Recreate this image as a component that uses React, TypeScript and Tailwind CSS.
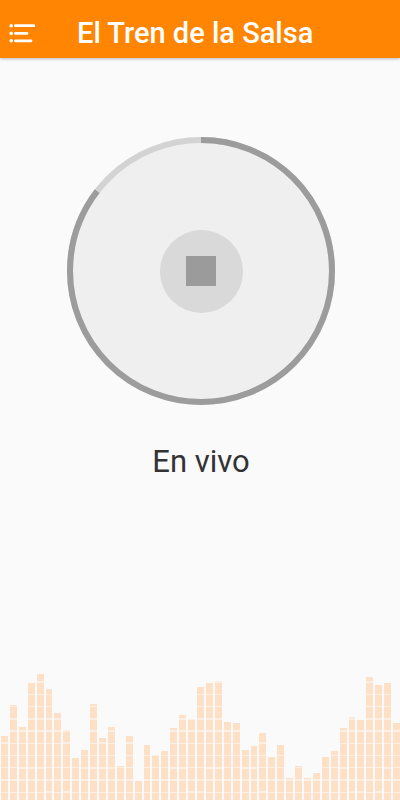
import React from 'react';

const bars = [
  64, 95, 73, 117, 126, 111, 87, 70, 42, 50, 96, 62, 73, 34, 64, 19, 55, 45, 49, 72, 85, 81, 113,
  117, 119, 78, 77, 50, 54, 67, 43, 55, 22, 34, 22, 27, 43, 49, 72, 83, 80, 123, 115, 117, 77,
];

const MenuIcon = () => (
  <svg width="26" height="20" viewBox="0 0 26 20" fill="none">
    <circle cx="2.2" cy="2.7" r="1.8" fill="#fff" />
    <circle cx="2.2" cy="10.4" r="1.8" fill="#fff" />
    <circle cx="2.2" cy="17.8" r="1.8" fill="#fff" />
    <line x1="6.4" y1="2.7" x2="25" y2="2.7" stroke="#fff" strokeWidth="2.8" strokeLinecap="round" />
    <line x1="6.4" y1="10.4" x2="18" y2="10.4" stroke="#fff" strokeWidth="2.8" strokeLinecap="round" />
    <line x1="6.4" y1="17.8" x2="22" y2="17.8" stroke="#fff" strokeWidth="2.8" strokeLinecap="round" />
  </svg>
);

const ProgressRing = () => {
  const r = 131;
  const c = 2 * Math.PI * r;
  const done = 0.854;
  return (
    <svg width="268" height="268" viewBox="0 0 268 268" className="absolute inset-0">
      <circle cx="134" cy="134" r={r} fill="#efefef" stroke="#d3d3d3" strokeWidth="6" />
      <circle
        cx="134"
        cy="134"
        r={r}
        fill="none"
        stroke="#9c9c9c"
        strokeWidth="6"
        strokeDasharray={`${c * done} ${c}`}
        transform="rotate(-90 134 134)"
      />
    </svg>
  );
};

export default function App() {
  return (
    <div className="flex h-[800px] w-[400px] flex-col overflow-hidden bg-[#fafafa] font-['Roboto',sans-serif]">
      <header className="relative z-10 flex h-[58px] shrink-0 items-center bg-[#ff8503] pt-[8px] shadow-[0_1px_3px_rgba(0,0,0,0.25)]">
        <div className="ml-[9px] w-[68px]">
          <MenuIcon />
        </div>
        <h1 className="text-[29px] leading-none font-medium text-white">El Tren de la Salsa</h1>
      </header>

      <main className="flex flex-1 flex-col items-center pt-[79px] pl-[2px]">
        <div className="relative flex h-[268px] w-[268px] items-center justify-center">
          <ProgressRing />
          <button className="relative flex h-[83px] w-[83px] items-center justify-center rounded-full bg-[#d9d9d9]">
            <span className="h-[30px] w-[30px] bg-[#9b9b9b]" />
          </button>
        </div>
        <p className="mt-[41px] text-[31px] leading-none text-[#333333]">En vivo</p>
      </main>

      <div className="grid h-[130px] shrink-0 grid-cols-45 items-end gap-[2px] pl-[1px]">
        {bars.map((h, i) => (
          <div
            key={i}
            className="bg-[image:repeating-linear-gradient(to_top,#fde0c5_0px,#fde0c5_7px,#fbefe4_7px,#fbefe4_8.5px,#fde0c5_8.5px,#fde0c5_12.25px)]"
            style={{ height: h }}
          />
        ))}
      </div>
    </div>
  );
}
